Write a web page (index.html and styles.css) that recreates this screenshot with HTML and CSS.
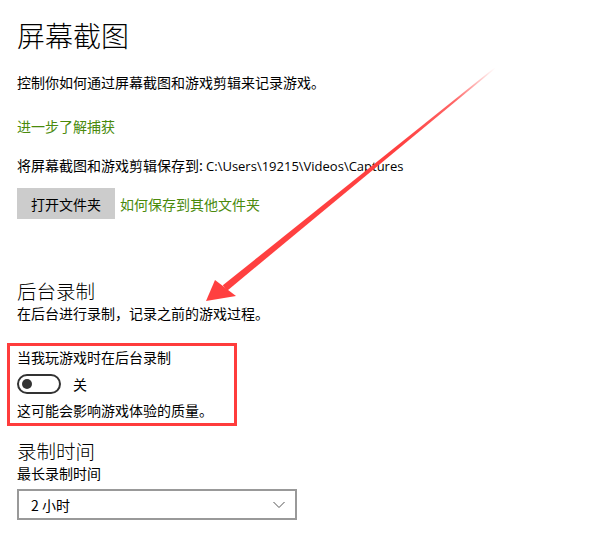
FILE: index.html
```html
<!DOCTYPE html>
<html lang="zh-CN">
<head>
<meta charset="utf-8">
<link rel="stylesheet" href="styles.css">
</head>
<body>
<div class="page">
  <h1 class="title">屏幕截图</h1>
  <p class="desc first">控制你如何通过屏幕截图和游戏剪辑来记录游戏。</p>
  <a class="link learn">进一步了解捕获</a>
  <p class="desc save">将屏幕截图和游戏剪辑保存到: <span class="path">C:\Users\19215\Videos\Captures</span></p>
  <div class="btnrow">
    <button class="btn">打开文件夹</button>
    <a class="link">如何保存到其他文件夹</a>
  </div>

  <h2 class="subtitle bg">后台录制</h2>
  <p class="desc">在后台进行录制，记录之前的游戏过程。</p>

  <div class="boxed">
    <p class="desc">当我玩游戏时在后台录制</p>
    <div class="togglerow">
      <span class="toggle"><span class="knob"></span></span>
      <span class="state">关</span>
    </div>
    <p class="desc">这可能会影响游戏体验的质量。</p>
  </div>

  <h2 class="subtitle rt">录制时间</h2>
  <p class="desc">最长录制时间</p>
  <div class="select">
    <span class="value">2 小时</span>
    <svg class="chev" width="12" height="8" viewBox="0 0 12 8"><path d="M0.5 1 L6 6.5 L11.5 1" fill="none" stroke="#555" stroke-width="1"/></svg>
  </div>

  <svg class="arrow" width="595" height="533" viewBox="0 0 595 533">
    <defs>
      <linearGradient id="g" x1="495" y1="68" x2="225" y2="288" gradientUnits="userSpaceOnUse">
        <stop offset="0" stop-color="#ff4040" stop-opacity="0"/>
        <stop offset="0.15" stop-color="#ff4040" stop-opacity="0.8"/>
        <stop offset="0.35" stop-color="#ff4040" stop-opacity="1"/>
        <stop offset="1" stop-color="#ff4040" stop-opacity="1"/>
      </linearGradient>
    </defs>
    <polygon points="495.4,68.4 494.6,67.6 222.8,285.3 227.2,290.7" fill="url(#g)"/>
    <polygon points="206,301 215,280 236,296" fill="#ff4040"/>
  </svg>
</div>
</body>
</html>
```
FILE: styles.css
```css
html, body {
  margin: 0;
  padding: 0;
  background: #ffffff;
}
body {
  width: 595px;
  height: 533px;
  overflow: hidden;
  font-family: "Noto Sans CJK SC", "Noto Sans", sans-serif;
  color: #000;
}
.page {
  position: relative;
  padding: 14px 0 0 17px;
  height: 533px;
  box-sizing: border-box;
}
.title {
  margin: 0;
  font-size: 28px;
  font-weight: 300;
  line-height: 42px;
}
.desc {
  margin: 0;
  font-size: 14px;
  line-height: 20px;
}
.path {
  font-family: "Open Sans", "Noto Sans", sans-serif;
  font-size: 13px;
}
.first {
  margin-top: 16px;
}
.link {
  display: block;
  color: #4a8a0c;
  font-size: 14px;
  line-height: 20px;
  text-decoration: none;
}
.learn {
  margin-top: 24px;
}
.save {
  margin-top: 19px;
}
.btnrow {
  display: flex;
  align-items: center;
  gap: 5px;
  margin-top: 12px;
}
.btn {
  width: 98px;
  height: 31px;
  border: none;
  background: #cccccc;
  font-family: "Noto Sans CJK SC", sans-serif;
  font-size: 14px;
  color: #000;
  padding: 0;
}
.subtitle {
  margin: 0;
  font-size: 19.5px;
  font-weight: 300;
  line-height: 24px;
}
.bg {
  margin-top: 60px;
}
.boxed {
  margin: 20px 0 0 -10px;
  width: 217px;
  height: 77px;
  border: 3px solid #ff3c3c;
  padding: 0 0 0 7px;
}
.boxed .desc:first-child {
  margin-top: 1px;
}
.togglerow {
  display: flex;
  align-items: center;
  gap: 12px;
  margin-top: 7px;
  height: 20px;
}
.toggle {
  width: 37px;
  height: 16px;
  border: 2px solid #333;
  border-radius: 10px;
  display: flex;
  align-items: center;
  padding-left: 3px;
  box-sizing: content-box;
}
.knob {
  width: 10px;
  height: 10px;
  border-radius: 50%;
  background: #333;
}
.state {
  font-size: 14px;
  line-height: 20px;
}
.togglerow + .desc {
  margin-top: 6px;
}
.rt {
  margin-top: 13px;
}
.select {
  margin-top: 6px;
  height: 27px;
  border: 2px solid #999;
  display: flex;
  align-items: center;
  justify-content: space-between;
  padding: 0 10px 0 12px;
  box-sizing: content-box;
  width: 254px;
}
.value {
  font-size: 14px;
}
.arrow {
  position: absolute;
  left: 0;
  top: 0;
  pointer-events: none;
}
```
